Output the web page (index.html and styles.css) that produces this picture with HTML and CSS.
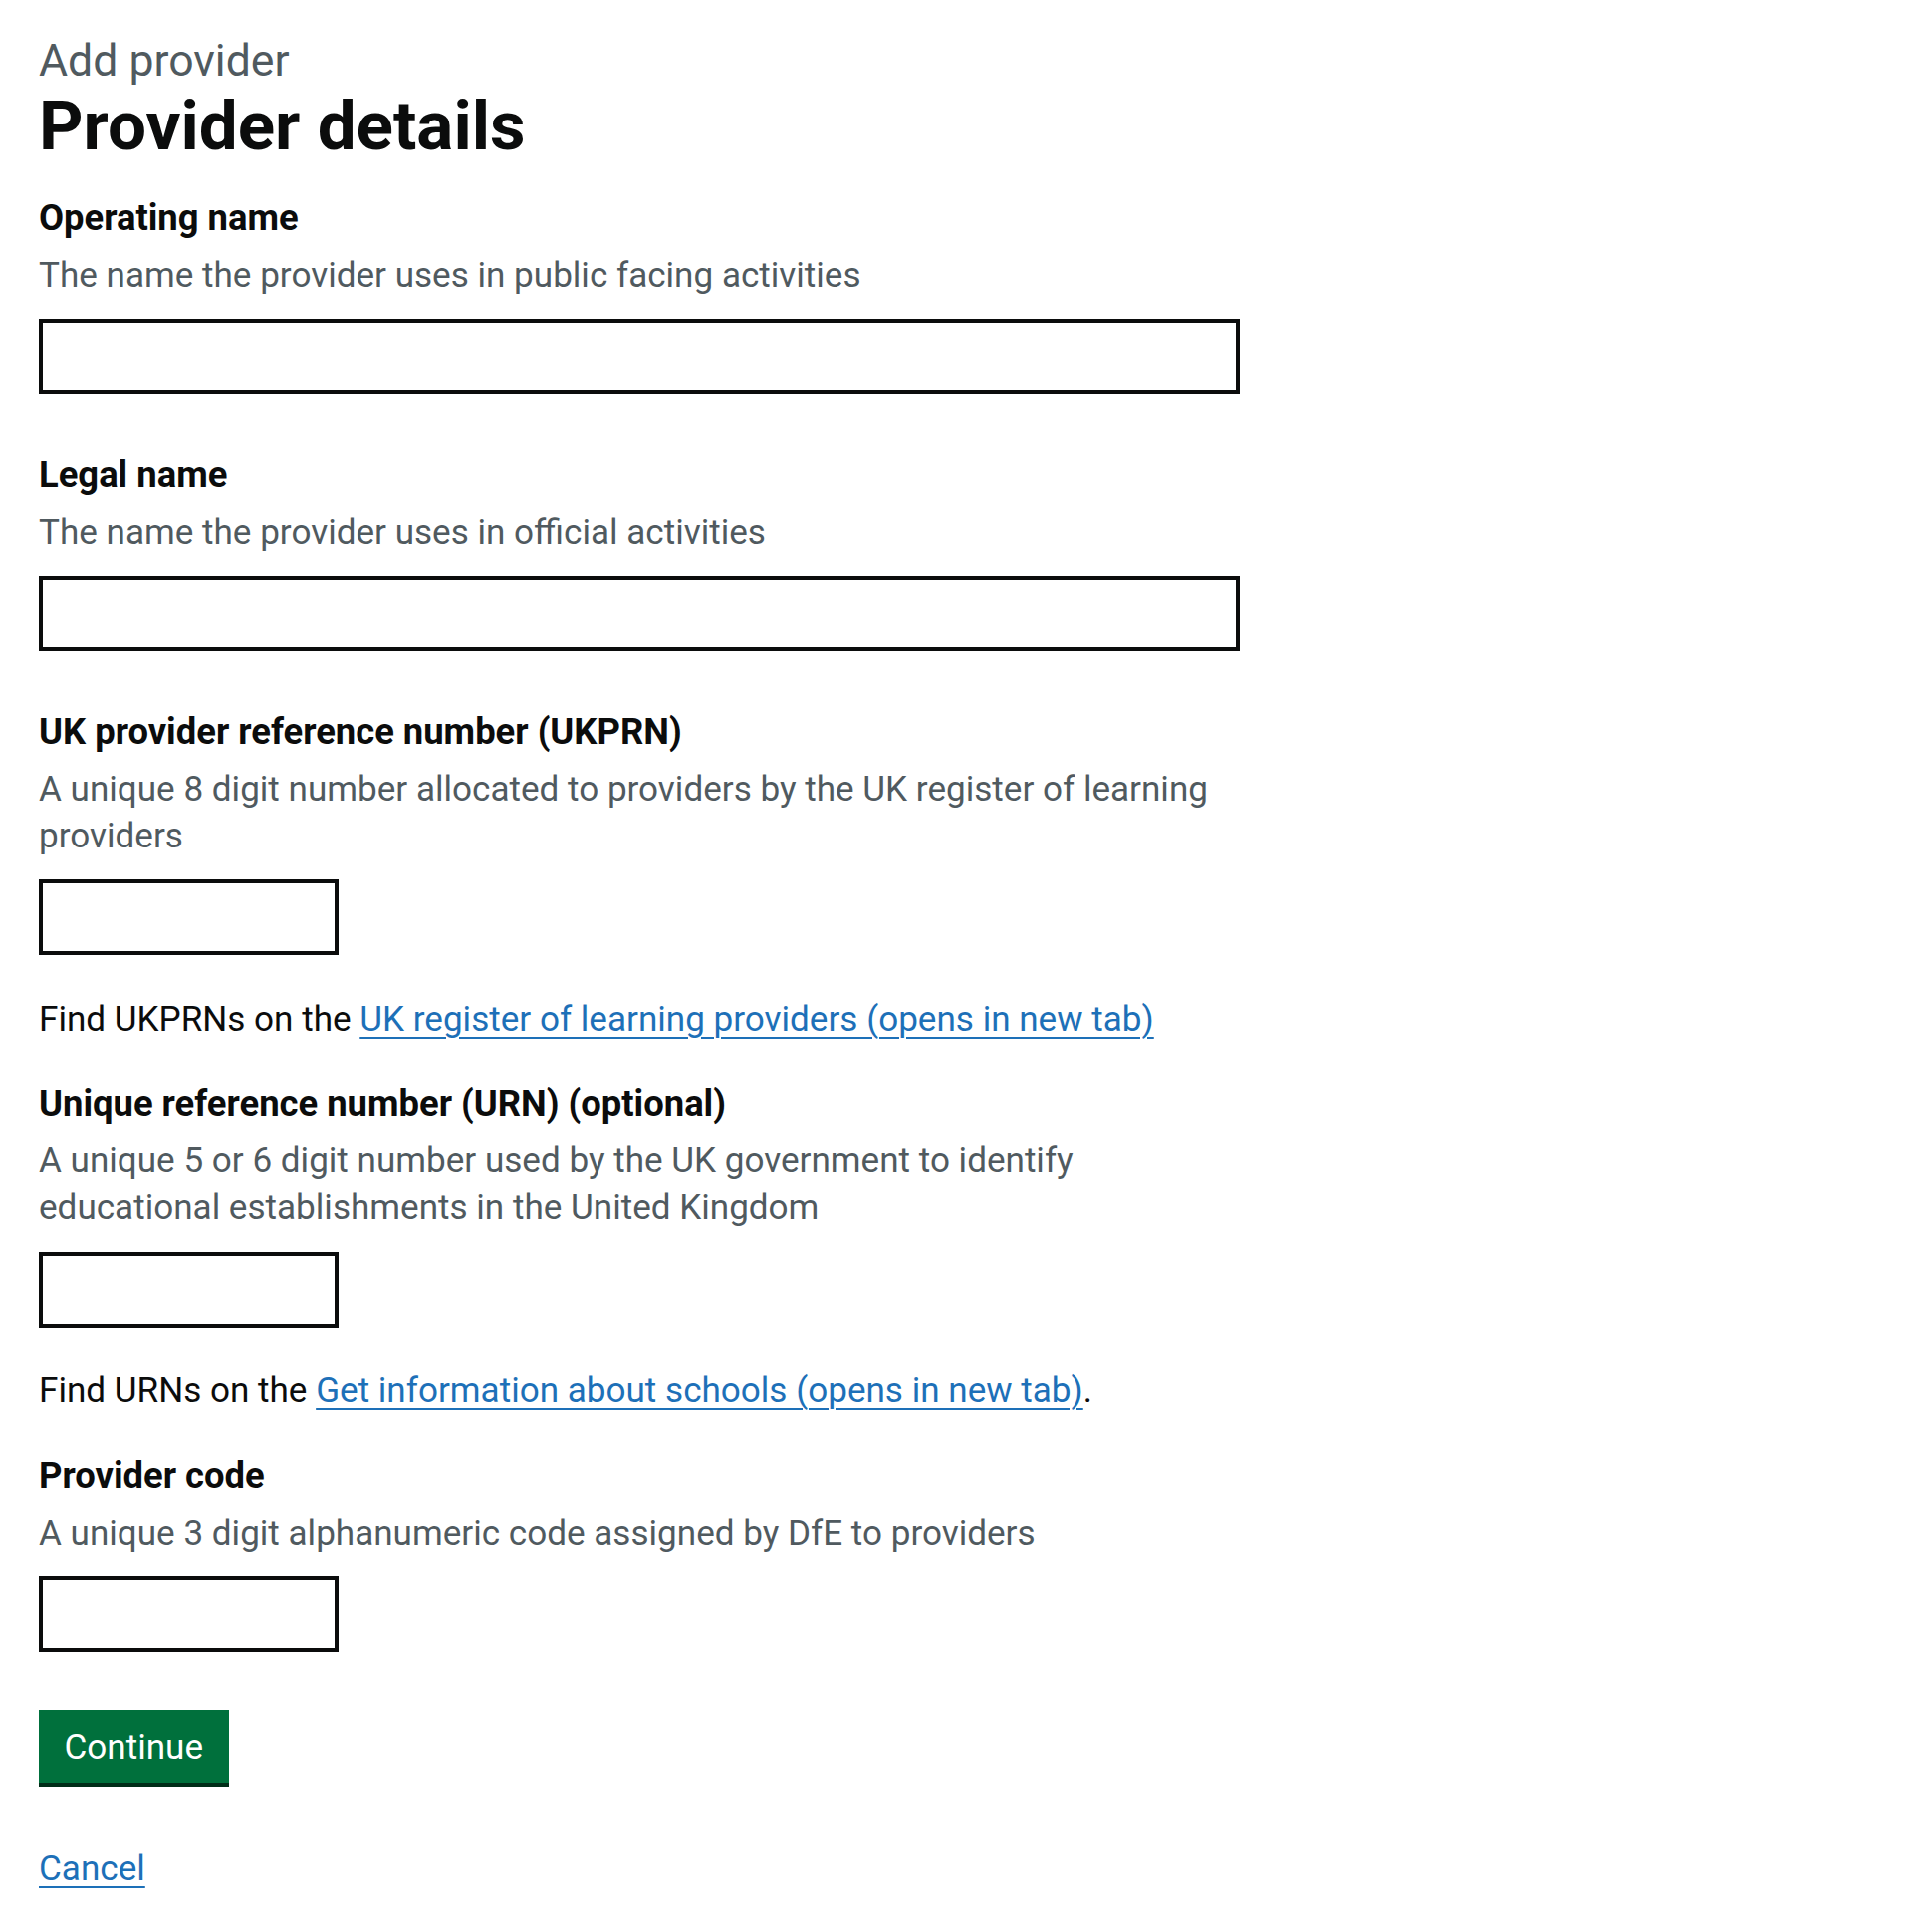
FILE: index.html
```html
<!DOCTYPE html>
<html lang="en">
<head>
<meta charset="utf-8">
<title>Provider details - Add provider</title>
<link rel="stylesheet" href="styles.css">
</head>
<body>
<main class="main">
  <div class="column">
    <span class="caption">Add provider</span>
    <h1 class="heading">Provider details</h1>

    <form class="form" action="#" novalidate>
      <div class="form-group">
        <label class="label" for="operating-name">Operating name</label>
        <div class="hint">The name the provider uses in public facing activities</div>
        <input class="input" id="operating-name" type="text">
      </div>

      <div class="form-group">
        <label class="label" for="legal-name">Legal name</label>
        <div class="hint">The name the provider uses in official activities</div>
        <input class="input" id="legal-name" type="text">
      </div>

      <div class="form-group form-group--tight">
        <label class="label" for="ukprn">UK provider reference number (UKPRN)</label>
        <div class="hint">A unique 8 digit number allocated to providers by the UK register of learning providers</div>
        <input class="input input--short" id="ukprn" type="text">
      </div>
      <p class="body">Find UKPRNs on the <a class="link" href="#">UK register of learning providers (opens in new tab)</a></p>

      <div class="form-group form-group--tight">
        <label class="label" for="urn">Unique reference number (URN) (optional)</label>
        <div class="hint">A unique 5 or 6 digit number used by the UK government to identify educational establishments in the United Kingdom</div>
        <input class="input input--short" id="urn" type="text">
      </div>
      <p class="body">Find URNs on the <a class="link" href="#">Get information about schools (opens in new tab)</a>.</p>

      <div class="form-group form-group--last">
        <label class="label" for="provider-code">Provider code</label>
        <div class="hint">A unique 3 digit alphanumeric code assigned by DfE to providers</div>
        <input class="input input--short" id="provider-code" type="text">
      </div>

      <button class="button" type="submit">Continue</button>
    </form>

    <p class="cancel"><a class="link" href="#">Cancel</a></p>
  </div>
</main>
</body>
</html>
```
FILE: styles.css
```css
html, body {
  margin: 0;
  padding: 0;
  background: #ffffff;
}

body {
  font-family: Roboto, "Liberation Sans", Arial, sans-serif;
  color: #0b0c0c;
}

.main {
  padding: 33px 0 40px 39px;
}

.column {
  width: 1206px;
  display: flex;
  flex-direction: column;
  align-items: flex-start;
}

.caption {
  display: block;
  font-size: 44.6px;
  line-height: 56px;
  color: #505a5f;
  font-weight: 400;
  margin: 0;
}

.heading {
  margin: 0 0 31px;
  font-size: 69.2px;
  line-height: 75px;
  font-weight: 700;
  color: #0b0c0c;
}

.form {
  width: 100%;
  margin: 0;
  display: flex;
  flex-direction: column;
  align-items: flex-start;
}

.form-group {
  width: 100%;
  display: flex;
  flex-direction: column;
  align-items: flex-start;
  margin-bottom: 57px;
}

.form-group--tight {
  margin-bottom: 40.5px;
}

.form-group--last {
  margin-bottom: 58px;
}

.label {
  display: block;
  font-size: 36.4px;
  line-height: 47px;
  font-weight: 700;
  margin-bottom: 10.5px;
}

.hint {
  font-size: 35.1px;
  line-height: 47px;
  color: #505a5f;
  margin-bottom: 20.5px;
}

.input {
  box-sizing: border-box;
  display: block;
  width: 100%;
  height: 76px;
  margin: 0;
  padding: 9px;
  border: 4px solid #0b0c0c;
  border-radius: 0;
  background: #ffffff;
  font-family: inherit;
  font-size: 35.1px;
  appearance: none;
}

.input--short {
  width: 301px;
}

.body {
  margin: 0 0 38px;
  font-size: 35.1px;
  line-height: 47px;
  color: #0b0c0c;
}

.link {
  color: #1d70b8;
  text-decoration: underline;
  text-decoration-thickness: 2px;
  text-underline-offset: 0.16em;
}

.button {
  box-sizing: border-box;
  display: inline-block;
  margin: 0 0 62.5px;
  padding: 13.6px 25.5px 12.4px 25.5px;
  height: 73px;
  border: 0;
  border-radius: 0;
  background: #00703c;
  box-shadow: 0 4px 0 #002d18;
  color: #ffffff;
  font-family: inherit;
  font-size: 35.1px;
  line-height: 47px;
  font-weight: 400;
  cursor: pointer;
}

.cancel {
  margin: 0;
  font-size: 35.1px;
  line-height: 47px;
}
```
